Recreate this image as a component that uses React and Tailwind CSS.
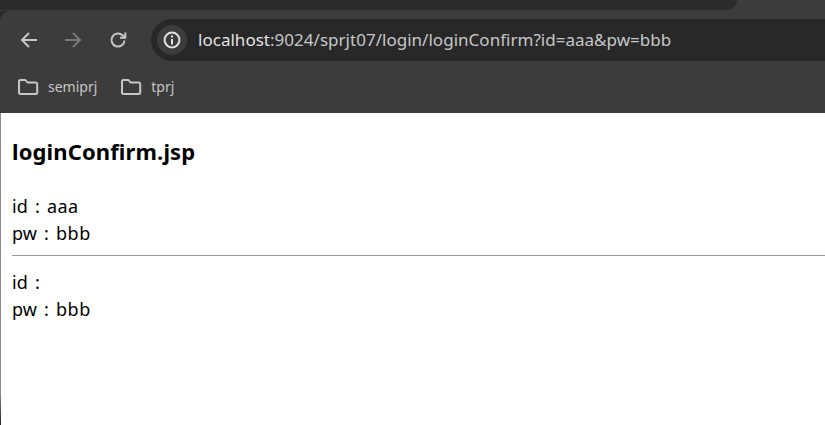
import React from "react";

const font = { fontFamily: '"Noto Sans", "Noto Sans CJK KR", sans-serif' };

function Folder() {
  return (
    <svg width="22" height="18" viewBox="0 0 22 18" fill="none" stroke="#c7c7c7" strokeWidth="2" strokeLinejoin="round">
      <path d="M2 3.5C2 2.4 2.6 2 3.5 2H8.5L10.5 4.5H18.5C19.6 4.5 20.2 5.1 20.2 6.2V14.5C20.2 15.6 19.6 16 18.5 16H3.5C2.6 16 2 15.6 2 14.5Z" />
    </svg>
  );
}

function Bookmark({ label }) {
  return (
    <div className="flex items-center gap-[9px]">
      <Folder />
      <span className="text-[14px] leading-[20px] text-[#c7c7c7]">{label}</span>
    </div>
  );
}

function Line({ name, value }) {
  return (
    <p className="[word-spacing:2.5px]">
      {name} : <span className="tracking-[0.5px]">{value}</span>
    </p>
  );
}

export default function App() {
  return (
    <div className="w-[825px] h-[425px] overflow-hidden bg-white flex flex-col" style={font}>
      <div className="h-[113px] bg-[#2b2b2b] shrink-0 flex flex-col">
        <div className="h-[11px] shrink-0 bg-[#3c3c3c]">
          <div className="w-[737px] h-[10px] bg-[#2b2b2b] rounded-br-[12px]" />
        </div>
        <div className="flex-1 bg-[#3c3c3c] rounded-tl-[10px] flex flex-col">
          <div className="h-[42px] mt-[8px] flex items-center">
            <div className="w-[57px] flex justify-center">
              <svg width="18" height="18" viewBox="0 0 18 18" fill="none" stroke="#c7c7c7" strokeWidth="2"><path d="M2 9H17M9 2L2 9L9 16" /></svg>
            </div>
            <div className="w-[32px] flex justify-center">
              <svg width="18" height="18" viewBox="0 0 18 18" fill="none" stroke="#787878" strokeWidth="2"><path d="M1 9H16M9 2L16 9L9 16" /></svg>
            </div>
            <div className="w-[58px] flex justify-center">
              <svg width="18" height="18" viewBox="0 0 18 18" fill="none" stroke="#c7c7c7" strokeWidth="2"><path d="M15.5 9.5A6.5 6.5 0 1 1 13.5 4.3L16 6.5" /><path d="M16.3 1.5V6.8H11" /></svg>
            </div>
            <div className="ml-[4px] flex-1 h-[42px] bg-[#282828] rounded-l-full flex items-center pl-[6px]">
              <div className="w-[30px] h-[30px] rounded-full bg-[#3c3c3c] flex items-center justify-center">
                <svg width="18" height="18" viewBox="0 0 18 18" fill="none" stroke="#e3e3e3" strokeWidth="2">
                  <circle cx="9" cy="9" r="7.4" />
                  <path d="M9 8V13.5M9 4.6V6.6" />
                </svg>
              </div>
              <span className="ml-[11px] text-[17px] leading-[24px] text-[#c7c7c7] tracking-[0.02px]">
                <span className="text-[#e3e3e3]">localhost</span>:9024/sprjt07/login/loginConfirm?id=aaa&amp;pw=bbb
              </span>
            </div>
          </div>
          <div className="flex items-center gap-[23px] pl-[17px] mt-[4px] h-[44px]">
            <Bookmark label="semiprj" />
            <Bookmark label="tprj" />
          </div>
        </div>
      </div>
      <div className="flex-1 flex">
        <div className="w-px shrink-0 bg-linear-to-b from-[#8a8a8a] via-[#8a8a8a] via-90% to-[#222222]" />
        <div className="flex-1 pl-[11px] pt-[22px] text-black">
          <h1 className="text-[22px] leading-[32px] font-bold tracking-[0.12px]">loginConfirm.jsp</h1>
          <div className="mt-[26px] text-[18px] leading-[27px]">
            <Line name="id" value="aaa" />
            <Line name="pw" value="bbb" />
          </div>
          <hr className="mt-[8px] mb-[13px] border-t border-t-[#999999]" />
          <div className="text-[18px] leading-[27px]">
            <p className="[word-spacing:2.5px]">id :</p>
            <Line name="pw" value="bbb" />
          </div>
        </div>
      </div>
    </div>
  );
}
